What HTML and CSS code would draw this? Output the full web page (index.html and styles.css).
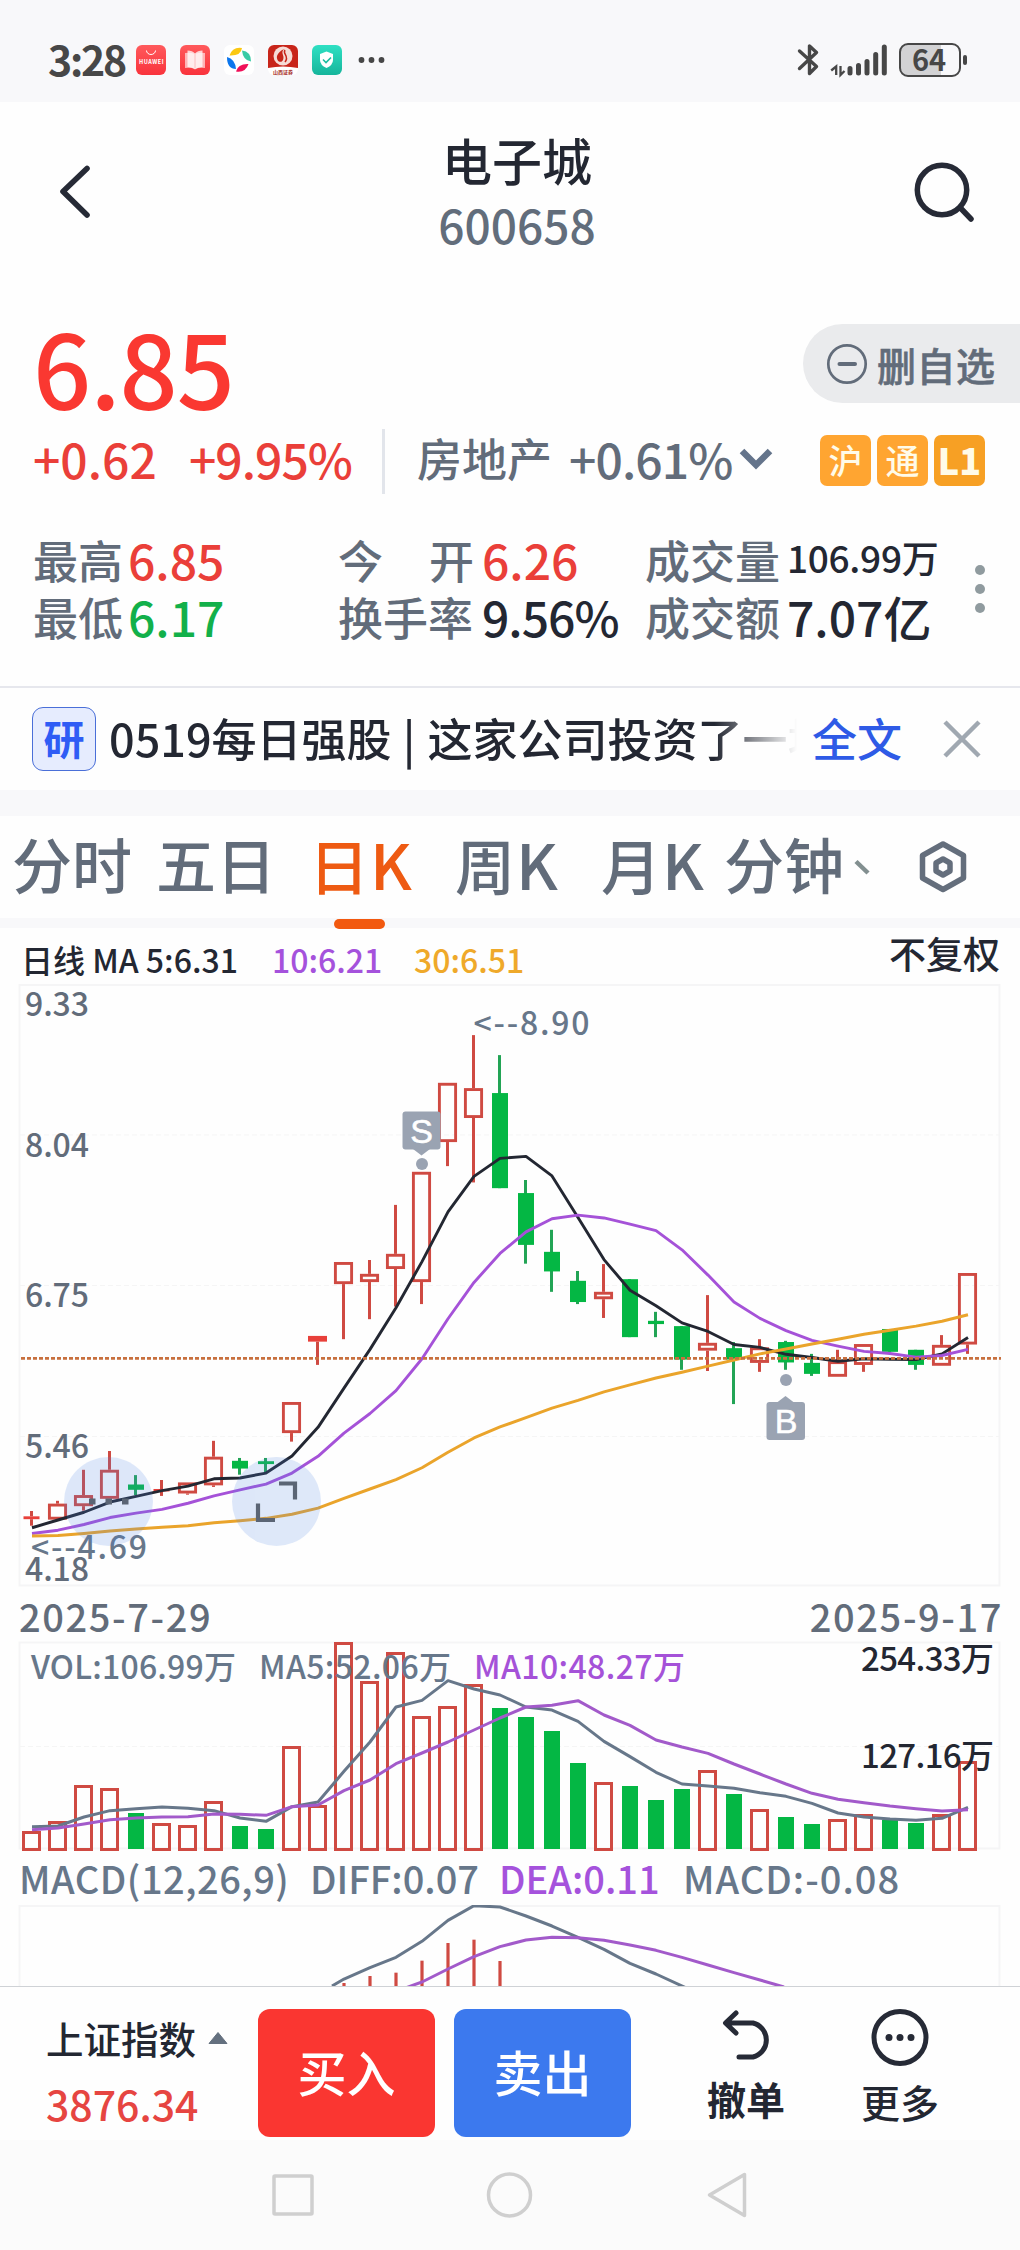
FILE: index.html
```html
<!DOCTYPE html>
<html lang="zh-CN">
<head>
<meta charset="utf-8">
<title>电子城 600658</title>
<link rel="stylesheet" href="styles.css">
</head>
<body>
<div class="status">
  <span class="clock">3:28</span>
  <svg class="apps" width="260" height="34" viewBox="134 43 260 34">
    <defs>
      <linearGradient id="gr" x1="0" y1="0" x2="0" y2="1"><stop offset="0" stop-color="#ff5a5c"/><stop offset="1" stop-color="#f9333c"/></linearGradient>
      <linearGradient id="gg" x1="0" y1="0" x2="0" y2="1"><stop offset="0" stop-color="#2fe0c3"/><stop offset="1" stop-color="#16b59b"/></linearGradient>
    </defs>
    <rect x="136" y="45" width="30" height="30" rx="6" fill="url(#gr)"/>
    <path d="M146.500 50.500a4.500 4 0 0 0 9 0" fill="none" stroke="#fff" stroke-width="1"/>
    <text x="139" y="64" font-size="5.500" font-weight="700" fill="#fff" textLength="24.500">HUAWEI</text>
    <rect x="180" y="45" width="30" height="30" rx="6" fill="url(#gr)"/>
    <path d="M185 53q5-1 10 1q5-2 10-1v15q-5-1-10 1q-5-2-10-1z" fill="#fff" opacity=".6"/>
    <path d="M187.500 50.500q5 0 7.500 3q2.500-3 7.500-3v16.500q-5 0-7.500 2.500q-2.500-2.500-7.500-2.500z" fill="#fff" opacity=".75"/>
    <path d="M195 54v14.500" stroke="#f9b3b5" stroke-width=".8"/>
    <rect x="224" y="45" width="30" height="30" rx="6" fill="#fff"/>
    <path d="M229.500 55.500q3-9 12.500-7.500q-1 8-12.500 7.500z" fill="#fbc812"/>
    <path d="M242 50.500q9 1 9 11q-8-1-9-11z" fill="#38cba5"/>
    <path d="M227 57q8 2 9 12q-9 0-9-12z" fill="#0b76ee"/>
    <path d="M236 71.500q2-8 12.500-7.500q-3 9-12.500 7.500z" fill="#f01058"/>
    <rect x="268" y="45" width="30" height="30" rx="6" fill="#fff"/>
    <path d="M268 68v-17a6 6 0 0 1 6-6h18a6 6 0 0 1 6 6v17q-15-3-30 0z" fill="#c8251a"/>
    <circle cx="283" cy="56" r="9.500" fill="#f6dcd6"/>
    <path d="M284 49c-4 4 1 6-1 11c-2 4-7 1-6-4c1-3 3-5 7-7z" fill="#c62418"/>
    <path d="M285 50c-3 4 5 6 0 12" fill="none" stroke="#c62418" stroke-width="1.500"/>
    <text x="273" y="73.500" font-size="5" font-weight="700" fill="#a52a20" textLength="20">山西证券</text>
    <rect x="312" y="45" width="30" height="30" rx="6" fill="url(#gg)"/>
    <path d="M326.500 51.500l6.500 2.500v6q0 5-6.500 8q-6.500-3-6.500-8v-6z" fill="#fff"/>
    <path d="M323 59.500l3 3l5-5" fill="none" stroke="#1bbd9f" stroke-width="1.600"/>
    <g fill="#474747"><circle cx="361.500" cy="60" r="2.900"/><circle cx="371.500" cy="60" r="2.900"/><circle cx="381.500" cy="60" r="2.900"/></g>
  </svg>
  <svg class="signals" width="176" height="36" viewBox="794 41 176 36" fill="none" stroke="#474747">
    <path d="M799.500 50l17 15.500l-7 7v-11M799.500 67.500l17-16l-7-6.500v12" stroke-width="3.400" stroke-linejoin="round" stroke-linecap="round"/>
    <path d="M836.200 74v-8.500l-5 4M840.500 65v9l4-4" stroke-width="2.300"/>
    <path d="M850 67.500v4.500M858.500 64.500v7.500M867 60.500v11.500M875.700 53.500v18.500M884.300 46v26" stroke-width="5" stroke-linecap="round"/>
    <path d="M941 44h-34a7 7 0 0 0-7 7v16a7 7 0 0 0 7 7h34z" fill="#d2d2d4" stroke="none"/>
    <rect x="900" y="43" width="60" height="32" rx="8" stroke-width="2"/>
    <path d="M965 56v6" stroke-width="4" stroke-linecap="round"/>
    <text x="912" y="70" font-size="29" font-weight="700" fill="#474747" stroke="none" textLength="34">64</text>
  </svg>
</div>

<header class="head">
  <svg width="40" height="60" viewBox="55 161 40 60" fill="none" stroke="#262a36" stroke-width="5.600" stroke-linecap="round" stroke-linejoin="round"><path d="M87 168.500L63 191.500L87 215"/></svg>
  <div class="title"><h1>电子城</h1><p>600658</p></div>
  <svg width="64" height="64" viewBox="912 159 64 64" fill="none" stroke="#262a36" stroke-width="5.500" stroke-linecap="round"><circle cx="942" cy="190" r="24.700"/><path d="M960.500 208l10.500 11"/></svg>
</header>

<section class="quote">
  <div class="pricerow">
    <div class="price">6.85</div>
    <button class="unwatch"><svg width="42" height="42" viewBox="0 0 42 42" fill="none" stroke="#626c7a"><circle cx="21" cy="21" r="18.700" stroke-width="2.700"/><path d="M13.500 21h15.500" stroke-width="4" stroke-linecap="round"/></svg>删自选</button>
  </div>
  <div class="change">
    <span class="up d1">+0.62</span><span class="up d2">+9.95%</span><i class="bar"></i>
    <span class="sector">房地产</span><span class="pct">+0.61%</span>
    <svg width="34" height="22" viewBox="0 0 34 22" fill="none" stroke="#64748b" stroke-width="6.500"><path d="M3 3l14 14l14-14"/></svg>
    <span class="badges"><b>沪</b><b>通</b><b class="l1">L1</b></span>
  </div>
  <div class="stats">
    <div class="col c1"><p><label>最高</label><span class="up">6.85</span></p><p><label>最低</label><span class="down">6.17</span></p></div>
    <div class="col c2"><p><label><i>今</i><i>开</i></label><span class="up">6.26</span></p><p><label>换手率</label><span class="rate">9.56%</span></p></div>
    <div class="col c3"><p><label>成交量</label><span class="small">106.99万</span></p><p><label>成交额</label><span>7.07亿</span></p></div>
    <svg width="10" height="50" viewBox="0 0 10 50" fill="#909b9f"><circle cx="5" cy="6" r="5"/><circle cx="5" cy="25" r="5"/><circle cx="5" cy="44" r="5"/></svg>
  </div>
</section>

<section class="news">
  <b class="tag">研</b>
  <p class="headline">0519每日强股 <span class="pipe">|</span> 这家公司投资了一块</p>
  <a class="full">全文</a>
  <svg width="38" height="38" viewBox="0 0 38 38" stroke="#a0a8b1" stroke-width="4.500"><path d="M2 2l34 34M36 2L2 36"/></svg>
</section>

<nav class="tabs">
  <span class="t1">分时</span><span class="t2">五日</span><span class="t3 on">日<i>K</i></span><span class="t4">周<i>K</i></span><span class="t5">月<i>K</i></span><span class="t6">分钟</span>
  <svg class="more" width="16" height="20" viewBox="853 855 16 20" stroke="#828f90" stroke-width="4.500"><path d="M855 859.500l12 11.500"/></svg>
  <svg class="gear" width="52" height="54" viewBox="917 840 52 54" fill="none" stroke="#646e7c" stroke-width="5.500" stroke-linejoin="round"><path d="M943 844l20.500 11.500v22.500l-20.500 11.500l-20.500-11.500v-22.500z"/><path d="M943 859l7 4v8l-7 4l-7-4v-8z"/></svg>
</nav>

<div class="legend">
  <span class="m5">日线 MA 5:6.31</span><span class="m10">10:6.21</span><span class="m30">30:6.51</span><span class="adj">不复权</span>
</div>
<svg id="kline" class="plot" width="1020" height="606" viewBox="0 984 1020 606"></svg>
<div class="dates"><span>2025-7-29</span><span>2025-9-17</span></div>
<svg id="volume" class="plot" width="1020" height="212" viewBox="0 1641 1020 212"></svg>
<div class="macdline"><span class="a">MACD(12,26,9)</span><span class="b">DIFF:0.07</span><span class="c">DEA:0.11</span><span class="d">MACD:-0.08</span></div>
<svg id="macd" class="plot" width="1020" height="81" viewBox="0 1905 1020 81"></svg>

<footer class="actions">
  <div class="index"><p>上证指数<svg width="20" height="12" viewBox="0 0 20 12"><path d="M10 0.500L19 11.500H1z" fill="#64707f" stroke="#64707f" stroke-linejoin="round"/></svg></p><strong>3876.34</strong></div>
  <button class="buy">买入</button>
  <button class="sell">卖出</button>
  <div class="act undo"><svg width="54" height="56" viewBox="718 2008 54 56" fill="none" stroke="#262a36" stroke-width="5" stroke-linecap="round" stroke-linejoin="round"><path d="M734 2013l-10.500 10l10.500 10M724 2023h27a17.500 17.500 0 0 1 0 34h-14"/></svg><span>撤单</span></div>
  <div class="act"><svg width="60" height="60" viewBox="868 2007 60 60"><circle cx="898" cy="2037.500" r="26" fill="none" stroke="#262a36" stroke-width="5"/><g fill="#262a36"><circle cx="887" cy="2037.500" r="3.500"/><circle cx="898" cy="2037.500" r="3.500"/><circle cx="909" cy="2037.500" r="3.500"/></g></svg><span class="lt">更多</span></div>
</footer>
<div class="sysnav">
  <svg width="1020" height="110" viewBox="0 2140 1020 110" fill="none" stroke="#cfcfcf" stroke-width="3.500" stroke-linejoin="round"><rect x="274" y="2176" width="38" height="38" rx="1"/><circle cx="509.500" cy="2195" r="21"/><path d="M744.500 2174.500v41l-35-20.500z"/></svg>
</div>
<script src="chart.js"></script>
</body>
</html>
```
FILE: styles.css
```css
* { box-sizing: border-box; margin: 0; padding: 0; }
body { width: 1020px; background: #fefefe; color: #232732; font-family: "Noto Sans CJK SC", "Noto Sans", sans-serif; font-weight: 500; overflow-x: hidden; }
svg { display: block; flex: none; }
button { border: 0; font: inherit; }
i { font-style: normal; }
.up { color: #ea3f39; }
.down { color: #12b04a; }
span, label, p, b { white-space: nowrap; }

.status { height: 102px; background: #f8f8fa; display: flex; align-items: center; padding: 18px 50px 0 48px; }
.clock { width: 86px; font-size: 41px; line-height: 44px; font-weight: 700; color: #474747; letter-spacing: -2.2px; position: relative; top: -2px; }
.signals { margin-left: auto; }

.head { height: 198px; display: flex; justify-content: space-between; padding: 0 44px 0 55px; }
.head > svg:first-child { margin-top: 59px; }
.head > svg:last-child { margin-top: 57px; }
.title { text-align: center; padding-top: 25px; margin-left: 27px; }
.title h1 { font-size: 50px; font-weight: 500; line-height: 64px; }
.title p { font-size: 46px; line-height: 66px; color: #626d7b; }

.pricerow { height: 116px; display: flex; justify-content: space-between; align-items: flex-start; padding-left: 33px; }
.price { font-size: 102px; line-height: 116px; margin-top: 8px; color: #fa3831; letter-spacing: -1px; }
.unwatch { width: 217px; height: 79px; margin-top: 24px; border-radius: 40px 0 0 40px; background: #eaebed; color: #626c7a; display: flex; align-items: center; padding-left: 23px; gap: 9px; font-size: 39px; line-height: 74px; letter-spacing: .5px; -webkit-text-stroke: .6px #626c7a; }
.unwatch span { position: relative; }

.change { height: 90px; display: flex; align-items: center; padding-left: 33px; font-size: 48px; line-height: 70px; color: #626c7a; }
.change span { position: relative; top: -3px; }
.change .badges { top: -1px; }
.d1 { width: 156px; }
.d2 { width: 193px; letter-spacing: -1px; }
.bar { width: 3px; height: 65px; background: #e2e5eb; }
.sector { font-size: 45px; margin-left: 32px; width: 152px; }
.pct { width: 170px; letter-spacing: -.9px; }
.change svg { position: relative; top: -2px; }
.badges { display: flex; gap: 6px; margin-left: 47px; }
.badges b { width: 51px; height: 51px; border-radius: 7px; background: #ffa531; color: #fffbe8; font-size: 34px; font-weight: 500; line-height: 49px; text-align: center; }
.badges .l1 { background: #f7a024; font-weight: 900; font-size: 36px; }

.stats { height: 180px; display: flex; padding: 25px 0 0 33px; color: #232732; }
.col p { display: flex; height: 57px; align-items: center; line-height: 57px; font-size: 48px; }
.col label { font-size: 45px; color: #626c7a; display: flex; justify-content: space-between; }
.c1 { width: 305px; }
.c1 label { width: 95px; }
.c2 { width: 307px; }
.c2 label { width: 144px; }
.c3 label { width: 142px; }
.c2 label i:last-child { margin-right: 8px; }
.c3 { width: 330px; }
.rate { letter-spacing: -1px; }
.small { font-size: 37px; position: relative; top: -2px; letter-spacing: -.3px; }
.stats svg { margin-top: 33px; }

.news { height: 104px; border-top: 2px solid #e6e7ed; display: flex; align-items: center; padding-left: 32px; }
.tag { width: 64px; height: 64px; border: 1.5px solid #4a6fd8; border-radius: 11px; background: #e6ecfe; color: #2f5cf5; font-size: 41px; line-height: 58px; text-align: center; }
.headline { margin-left: 13px; width: 688px; overflow: hidden; font-size: 45px; line-height: 66px; -webkit-mask-image: linear-gradient(90deg, #000 88%, transparent 100%); mask-image: linear-gradient(90deg, #000 88%, transparent 100%); position: relative; top: -1px; }
.pipe { margin: 0 2px 0 1px; }
.full { margin-left: 15px; width: 131px; font-size: 45px; line-height: 64px; color: #2e5ae6; position: relative; top: -1px; }

.tabs { height: 138px; border-top: 26px solid #f8f8fa; border-bottom: 10px solid #f8f8fa; display: flex; align-items: center; font-size: 60px; line-height: 100px; color: #626c7a; padding-left: 12px; }
.tabs span { position: relative; top: -4px; }
.tabs i { font-size: 63px; margin-left: 1px; }
.t1 { width: 144px; }
.t2 { width: 153px; }
.t3 { width: 146px; }
.t4 { width: 146px; }
.t5 { width: 123px; }
.t6 { width: 131px; }
.tabs .on { color: #ee5a12; }
.on::after { content: ""; position: absolute; left: 25px; bottom: -15px; width: 51px; height: 10px; border-radius: 5px; background: #f2590f; }
.more { margin-left: -1px; }
.gear { margin-left: 47px; }

.legend { height: 56px; display: flex; padding-left: 21px; font-size: 32px; line-height: 63px; }
.m5 { width: 251px; }
.m10 { width: 142px; color: #a552dc; }
.m30 { width: 475px; color: #efa92a; }
.adj { font-size: 37px; line-height: 51px; }

.dates { height: 51px; display: flex; justify-content: space-between; padding: 0 17px 0 19px; font-size: 38px; line-height: 51px; letter-spacing: 1.6px; color: #626c7a; }
.macdline { height: 52px; display: flex; padding-left: 19px; font-size: 38px; line-height: 50px; color: #67778a; }
.a { width: 291px; letter-spacing: .5px; }
.b { width: 189px; }
.c { width: 184px; color: #a552dc; }
.d { letter-spacing: 1px; }

.actions { height: 154px; border-top: 1px solid #cfd2d6; display: flex; background: #fefefe; }
.index { width: 258px; padding: 24px 0 0 46px; }
.index p { display: flex; align-items: center; gap: 12px; font-size: 37.5px; line-height: 53px; }
.index strong { display: block; font-weight: 500; font-size: 41px; line-height: 56px; margin-top: 11px; color: #e64541; }
.buy, .sell { width: 177px; height: 128px; margin: 22px 19px 0 0; padding-bottom: 6px; border-radius: 12px; background: #fa3631; color: #fff; font-size: 49px; }
.sell { background: #3c79ee; }
.act { width: 154px; display: flex; flex-direction: column; align-items: center; font-size: 39px; line-height: 56px; padding-top: 20px; }
.undo { margin-left: 19px; font-weight: 700; }
.undo svg { margin-bottom: 6px; margin-top: 1px; position: relative; left: 1px; }
.act .lt { margin-top: 6px; }
.sysnav { height: 110px; background: #fbfbfb; }
```
FILE: chart.js
```js
const RED = '#cf4a42', GREEN = '#04b744', INK = '#232732', GREY = '#67778a', PURPLE = '#a552d8', GOLD = '#eaa42b';
const X0 = 31.5, STEP = 26;
const cx = i => X0 + STEP * i;
// Price pane values are stored in 1/2.45 px below y=980, volume pane values in 1/3 px below y=1580.
const py = v => 980 + v / 2.45;
const vy = v => 1580 + v / 3;
const rect = (x, y, w, h, attrs) => `<rect x="${x}" y="${y}" width="${w}" height="${h}" ${attrs}/>`;
const line = (x1, y1, x2, y2, attrs) => `<path d="M${x1} ${y1}L${x2} ${y2}" ${attrs}/>`;
const poly = (pts, color, w) => `<polyline points="${pts.map(p => p.join()).join(' ')}" fill="none" stroke="${color}" stroke-width="${w}" stroke-linejoin="round"/>`;
const text = (s, x, y, size, len, color) => `<text x="${x}" y="${y}" font-size="${size}" textLength="${len}" fill="${color}">${s}</text>`;

// [colour, high, body top, body bottom, low]
const candles = [
  ['r',1301,1314,1321,1337],['r',1276,1283,1322,1322],['r',1200,1262,1289,1300],['r',1154,1200,1271,1271],
  ['g',1213,1236,1249,1262],['r',1225,1247,1253,1264],['r',1231,1231,1258,1261],['r',1129,1168,1238,1242],
  ['g',1171,1178,1197,1212],['g',1171,1179,1186,1207],['r',1034,1034,1110,1131],['s',872,872,886,943],
  ['r',691,691,745,880],['r',686,720,740,831],['r',551,671,708,800],['r',470,470,740,794],
  ['r',252,252,397,456],['r',135,265,338,496],['g',184,277,510,510],['g',490,522,649,695],
  ['g',612,666,714,764],['g',713,737,789,794],['r',696,764,782,828],['g',733,733,875,875],
  ['g',813,835,843,875],['g',848,848,930,955],['r',772,889,908,958],['g',887,902,930,1039],
  ['r',880,900,938,960],['g',884,887,937,955],['g',916,938,965,970],['r',906,934,972,972],
  ['r',892,892,943,960],['g',855,855,911,911],['g',906,906,943,955],['r',870,894,945,945],['r',718,718,893,916]
];
const ma5 = [1342,1323,1304,1279,1265,1251,1240,1222,1220,1208,1166,1096,1000,905,803,690,568,481,437,432,480,582,685,760,798,840,861,893,900,917,925,934,928,929,930,916,876];
const ma10 = [1356,1348,1334,1317,1306,1297,1282,1264,1249,1235,1208,1167,1110,1062,1006,928,830,741,670,617,585,576,583,598,614,661,723,789,829,859,883,897,910,915,924,920,905];
const ma30 = [1362,1361,1356,1350,1345,1341,1337,1330,1325,1319,1309,1294,1270,1247,1224,1195,1157,1122,1095,1072,1049,1030,1009,992,975,961,946,931,916,904,892,880,868,858,848,836,820];

const frame = (y, h) => rect(19.5, y, 980, h, 'fill="none" stroke="#f5f5f6" stroke-width="2"');
const grid = y => line(20, y, 999, y, 'stroke="#f5f5f5" stroke-width="1" stroke-dasharray="5 3"');

let k = frame(985, 600.5) + [1135, 1285.500, 1436.500].map(grid).join('');
candles.forEach(([c, hi, top, bot, lo], i) => {
  const x = cx(i), t = py(top), b = py(bot);
  if (c === 'g') {
    k += line(x, py(hi), x, py(lo), 'stroke="#22a455" stroke-width="3"') + rect(x - 7.5, t, 16, b - t, `fill="${GREEN}"`);
  } else {
    if (hi < top) k += line(x, py(hi), x, t, `stroke="${RED}" stroke-width="3"`);
    if (lo > bot) k += line(x, b, x, py(lo), `stroke="${RED}" stroke-width="3"`);
    if (c === 's' || b - t < 4) k += rect(x - (c === 's' ? 9.5 : 8), t, c === 's' ? 19 : 16, b - t, 'fill="#e8403a"');
    else k += rect(x - 8.1, t + 1.4, 16.2, b - t - 2.8, `fill="none" stroke="${RED}" stroke-width="2.9"`);
  }
});
k += '<g fill="#9aa3b2"><rect x="402.500" y="1111.500" width="38" height="38" rx="3"/><path d="M413 1149h17l-8.500 6.500z"/><circle cx="422" cy="1164" r="6"/><rect x="766.500" y="1402" width="38.500" height="38" rx="3"/><path d="M777 1402.500h17l-8.500-6.500z"/><circle cx="786" cy="1380" r="6"/></g>';
k += '<g font-family="Liberation Sans" font-size="34" fill="#fff" text-anchor="middle" stroke="#fff" stroke-width=".6"><text x="421.500" y="1143">S</text><text x="786" y="1432.500">B</text></g>';
const curve = (a, f) => a.map((v, i) => [cx(i) + .5, f(v)]);
k += poly(curve(ma5, py), INK, 2.9) + poly(curve(ma10, py), PURPLE, 2.9) + poly(curve(ma30, py), GOLD, 3);
k += line(21, 1358.3, 1001, 1358.3, 'stroke="#c8703e" stroke-width="2.800" stroke-dasharray="4 2"');
k += [['9.33', 1016], ['8.04', 1157], ['6.75', 1307], ['5.46', 1458], ['4.18', 1581]].map(([s, y]) => text(s, 25, y, 32, 64, '#626c7a')).join('');
k += text('&lt;--8.90', 473.5, 1035, 32, 116, GREY) + text('&lt;--4.69', 31, 1559, 32, 116, GREY);
k += '<g fill="#4f85e6" opacity=".18"><circle cx="108.500" cy="1501.500" r="44.500"/><circle cx="276.500" cy="1501.500" r="44.500"/></g>';
k += '<path d="M89 1501.500h6.500M105.500 1501.500h6.500M122 1501.500h6.500" stroke="#5b6575" stroke-width="6"/><path d="M279 1483.500h16v16M258 1503.500v16.500h17" fill="none" stroke="#5b6575" stroke-width="4.200"/>';
document.getElementById('kline').innerHTML = k;

// Positive = hollow red bar, negative = solid green bar; magnitude is the bar top.
const vol = [753,723,615,624,-699,729,735,663,-738,-747,498,675,186,303,216,408,378,312,-384,-411,-453,-549,606,-618,-660,-627,570,-642,687,-711,-732,717,702,-720,-729,702,543];
const vma5 = [740,738,711,692,686,681,685,692,714,724,680,666,574,486,381,361,302,327,345,381,390,424,484,530,577,612,618,625,638,649,670,699,711,717,721,715,682];
const vma10 = [749,744,732,719,714,711,710,702,703,706,680,675,632,600,551,519,486,450,414,381,376,362,405,436,480,501,520,552,582,612,640,658,668,678,686,693,689];
let v = frame(1642.5, 206) + grid(1746.5);
vol.forEach((n, i) => {
  const x = cx(i), t = vy(Math.abs(n));
  v += n < 0 ? rect(x - 7.5, t, 16, 1849 - t, `fill="${GREEN}"`) : rect(x - 8, t + 1.5, 16, 1848 - t, `fill="none" stroke="${RED}" stroke-width="3"`);
});
v += poly(curve(vma5, vy), GREY, 3) + poly(curve(vma10, vy), '#a25aca', 3);
v += text('VOL:106.99万', 31, 1679, 32, 205, GREY) + text('MA5:52.06万', 259, 1679, 32, 192, GREY) + text('MA10:48.27万', 474, 1679, 32, 211, PURPLE);
v += text('254.33万', 861, 1671, 33, 133, INK) + text('127.16万', 861, 1768, 33, 133, INK);
document.getElementById('volume').innerHTML = v;

const diff = [[332,1218],[344,1197],[370,1163],[396,1132],[422,1084],[448,1021],[474,977],[500,981],[526,1008],[552,1038],[578,1072],[604,1108],[630,1150],[656,1182],[685,1222]];
const dea = [[407,1222],[422,1206],[448,1167],[474,1130],[500,1100],[526,1080],[552,1072],[578,1073],[604,1081],[630,1095],[656,1111],[682,1132],[708,1155],[734,1178],[760,1200],[784,1221]];
const bars = [[344,1209],[370,1188],[396,1178],[422,1142],[448,1089],[474,1079],[500,1143]];
const scaled = a => a.map(([x, y]) => [x, vy(y)]);
document.getElementById('macd').innerHTML = frame(1906, 100)
  + bars.map(([x, y]) => line(x, vy(y), x, 1987, `stroke="${RED}" stroke-width="3.2"`)).join('')
  + poly(scaled(diff), GREY, 3) + poly(scaled(dea), '#a25aca', 3);
```
